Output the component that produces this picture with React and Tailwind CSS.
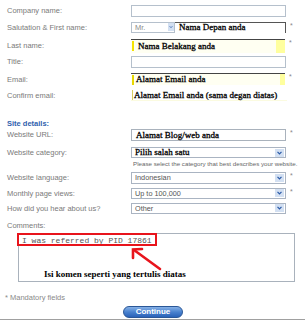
import React from "react";

const sans = { fontFamily: '"Liberation Sans", Arial, sans-serif' };

function Arrow() {
  return (
    <svg width="10" height="8" viewBox="0 0 10 8" className="block">
      <path d="M2.8 2.8 L5 5 L7.2 2.8" fill="none" stroke="#2a5aa8" strokeWidth="1.4" />
    </svg>
  );
}

function SelectBox({ text, serif, className = "" }) {
  return (
    <div className={`flex items-center bg-white border border-[#aab4c2] ${className}`}>
      <span
        className={
          serif
            ? "flex-1 pl-[3px] text-[9px] leading-none text-black font-['Liberation_Serif',serif] [-webkit-text-stroke:0.3px_black]"
            : "flex-1 pl-[3px] text-[7.3px] leading-none text-[#555] font-['Liberation_Sans',Arial,sans-serif]"
        }
      >
        {text}
      </span>
      <div className="w-[9px] h-[8px] mr-[1px] bg-[#d3e0f2] flex items-center justify-center">
        <Arrow />
      </div>
    </div>
  );
}

function Label({ children, className = "" }) {
  return (
    <div className={`w-[131px] shrink-0 pl-[7px] text-[7.5px] leading-none text-[#7a7a7a] font-['Liberation_Sans',Arial,sans-serif] whitespace-nowrap ${className}`}>
      {children}
    </div>
  );
}

function Star() {
  return <div className="ml-[4px] self-start text-[7px] leading-none text-[#888] font-['Liberation_Sans',Arial,sans-serif]">*</div>;
}

const serifCls =
  "text-[9px] leading-none text-black font-['Liberation_Serif',serif] [-webkit-text-stroke:0.3px_black] whitespace-nowrap";

export default function App() {
  return (
    <div className="w-[305px] h-[320px] bg-white overflow-hidden flex flex-col" style={sans}>
      {/* Company */}
      <div className="mt-[5px] h-[12px] flex items-center">
        <Label>Company name:</Label>
        <div className="w-[155px] h-full border border-[#b5c0cc] bg-white" />
      </div>
      {/* Salutation */}
      <div className="mt-[5px] h-[11px] flex items-center">
        <Label>Salutation &amp; First name:</Label>
        <div className="w-[44px] h-full flex items-center bg-white border border-[#b5c0cc]">
          <span className="flex-1 pl-[3px] text-[7.5px] leading-none text-[#8a8a8a]">Mr.</span>
          <div className="w-[6px] h-[8px] bg-[#d3e0f2] flex items-center justify-center overflow-hidden">
            <Arrow />
          </div>
        </div>
        <div className="w-[111px] h-full flex items-center border-t border-r border-[#555] bg-white">
          <span className={`pl-[4px] ${serifCls}`}>Nama Depan anda</span>
        </div>
        <Star />
      </div>
      {/* Last name */}
      <div className="mt-[6px] h-[14px] flex items-center">
        <Label>Last name:</Label>
        <div className="w-[154px] h-full flex items-center border-t border-[#444] bg-[#fffff2]">
          <div className="w-[2px] h-[10px] bg-[#f5e300] ml-[1px]" />
          <span className={`flex-1 pl-[4px] ${serifCls}`}>Nama Belakang anda</span>
          <div className="w-[9px] h-full bg-[#ffff9e]" />
        </div>
        <Star />
      </div>
      {/* Title */}
      <div className="mt-[3px] h-[13px] flex items-center">
        <Label>Title:</Label>
        <div className="w-[155px] h-full border border-[#b5c0cc] bg-white" />
      </div>
      {/* Email */}
      <div className="mt-[5px] h-[12px] flex items-center">
        <Label>Email:</Label>
        <div className="w-[154px] h-full flex items-center border-t border-[#444] bg-[#fffff2]">
          <div className="w-[2px] h-[10px] bg-[#e8d800] ml-[1px]" />
          <span className={`flex-1 pl-[2px] ${serifCls}`}>Alamat Email anda</span>
          <div className="w-[5px] h-full bg-[#ffff9e]" />
        </div>
        <Star />
      </div>
      {/* Confirm */}
      <div className="mt-[5px] h-[11px] flex items-center">
        <Label>Confirm email:</Label>
        <div className="w-[156px] h-full flex items-center border-b border-[#fbfbe0]">
          <div className="w-[1px] h-[10px] bg-[#d8cf60] ml-[1px]" />
          <span className={`pl-[1px] ${serifCls}`}>Alamat Email anda (sama degan diatas)</span>
        </div>
      </div>
      {/* Site details */}
      <div className="mt-[17px] h-[10px] flex items-center pl-[7px] text-[7.5px] leading-none font-bold text-[#2f5fae]">
        Site details:
      </div>
      {/* URL */}
      <div className="mt-[1px] h-[12px] flex items-center">
        <Label>Website URL:</Label>
        <div className="w-[155px] h-full flex items-center border border-[#a9b2bc] bg-white">
          <span className={`pl-[4px] ${serifCls}`}>Alamat Blog/web anda</span>
        </div>
        <Star />
      </div>
      {/* Category */}
      <div className="mt-[6px] h-[11px] flex items-center">
        <Label>Website category:</Label>
        <SelectBox text="Pilih salah satu" serif className="w-[155px] h-full" />
      </div>
      <div className="mt-[2px] h-[8px] flex items-center pl-[133px] text-[6.2px] leading-none text-[#666] whitespace-nowrap">
        Please select the category that best describes your website.
      </div>
      {/* Language */}
      <div className="mt-[4px] h-[12px] flex items-center">
        <Label>Website language:</Label>
        <SelectBox text="Indonesian" className="w-[155px] h-full" />
        <Star />
      </div>
      {/* Monthly */}
      <div className="mt-[4px] h-[11px] flex items-center">
        <Label>Monthly page views:</Label>
        <SelectBox text="Up to 100,000" className="w-[155px] h-full" />
        <Star />
      </div>
      {/* How */}
      <div className="mt-[4px] h-[11px] flex items-center">
        <Label>How did you hear about us?</Label>
        <SelectBox text="Other" className="w-[155px] h-full" />
      </div>
      {/* Comments */}
      <div className="mt-[8px] h-[8px] flex items-center">
        <Label>Comments:</Label>
      </div>
      <div className="mt-[3px] ml-[18px] w-[277px] h-[50px] border border-[#a9b2bc] bg-white relative">
        <div className="absolute -left-[2px] -top-[1px] w-[140px] h-[13px] border-2 border-[#e8141c]" />
        <div className="pt-[2px] pl-[3px] text-[8px] leading-[9px] text-[#555] font-['Liberation_Mono',monospace] whitespace-nowrap">
          I was referred by PID 17861
        </div>
        <svg className="absolute left-[107px] top-[12px]" width="40" height="26" viewBox="0 0 40 26">
          <path d="M34 23 L8 4" stroke="#e8141c" strokeWidth="2.6" fill="none" strokeLinecap="round" />
          <path d="M7 12 L7 3.5 L16 3" stroke="#e8141c" strokeWidth="2.6" fill="none" strokeLinecap="round" strokeLinejoin="miter" />
        </svg>
        <div className="mt-[25px] pl-[25px] text-[9px] leading-none font-bold text-black font-['Liberation_Serif',serif] whitespace-nowrap">
          Isi komen seperti yang tertulis diatas
        </div>
      </div>
      {/* Mandatory */}
      <div className="mt-[12px] h-[8px] flex items-center pl-[5px] text-[7.5px] leading-none text-[#8a8a8a]">
        * Mandatory fields
      </div>
      <div className="mt-[4px] flex justify-center pl-[1px]">
        <div className="w-[60px] h-[12px] rounded-full border border-[#2a5797] bg-gradient-to-b from-[#86b1e6] via-[#4a82cf] to-[#2a62b8] flex items-center justify-center text-[8px] leading-none font-bold text-white">
          Continue
        </div>
      </div>
      <div className="mt-[1px] h-[1px] bg-[#a0a0a0]" />
    </div>
  );
}
